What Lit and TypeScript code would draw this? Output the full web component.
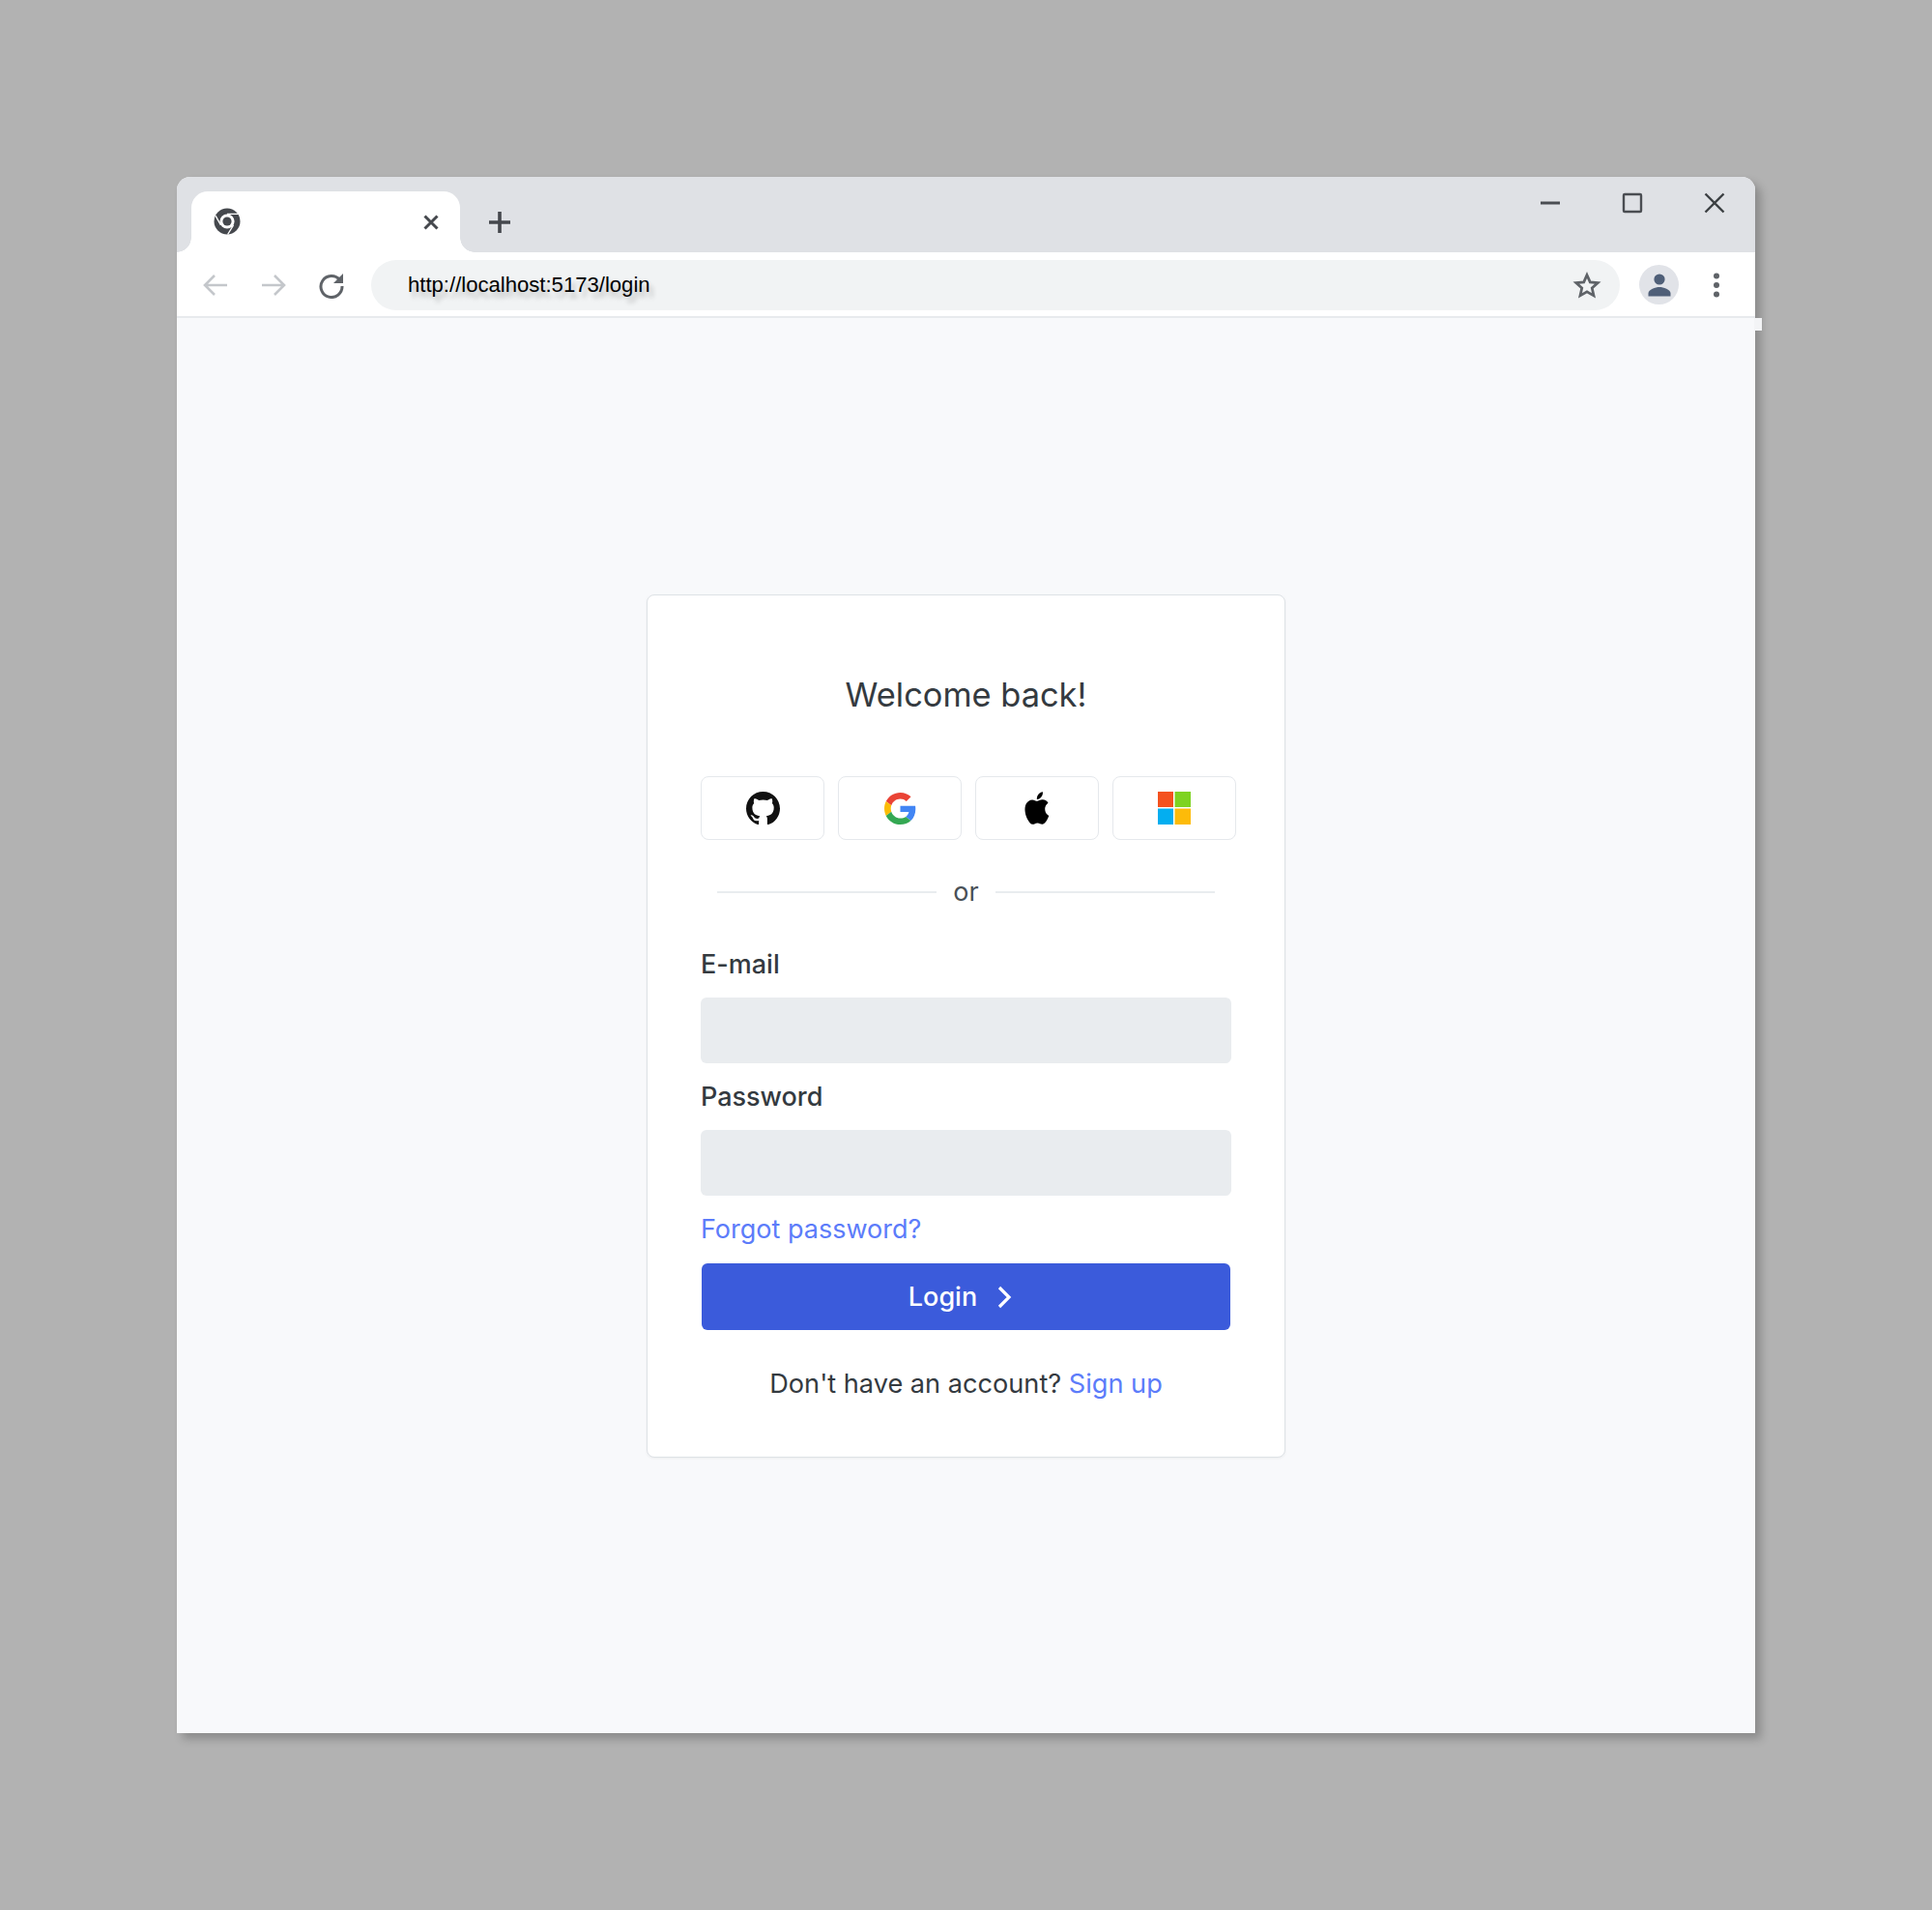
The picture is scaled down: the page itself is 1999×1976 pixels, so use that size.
import { LitElement, html, css, svg } from "lit";
import { customElement } from "lit/decorators.js";

const githubIcon = svg`<svg class="i-gh" viewBox="0 0 16 16"><path fill="#111" d="M8 0C3.58 0 0 3.58 0 8c0 3.54 2.29 6.53 5.47 7.59.4.07.55-.17.55-.38 0-.19-.01-.82-.01-1.49-2.01.37-2.53-.49-2.69-.94-.09-.23-.48-.94-.82-1.13-.28-.15-.68-.52-.01-.53.63-.01 1.08.58 1.23.82.72 1.21 1.87.87 2.33.66.07-.52.28-.87.51-1.07-1.78-.2-3.64-.89-3.64-3.95 0-.87.31-1.59.82-2.15-.08-.2-.36-1.02.08-2.12 0 0 .67-.21 2.2.82.64-.18 1.32-.27 2-.27.68 0 1.36.09 2 .27 1.53-1.04 2.2-.82 2.2-.82.44 1.1.16 1.92.08 2.12.51.56.82 1.27.82 2.15 0 3.07-1.87 3.75-3.65 3.95.29.25.54.73.54 1.48 0 1.07-.01 1.93-.01 2.2 0 .21.15.46.55.38A8.013 8.013 0 0016 8c0-4.42-3.58-8-8-8z"/></svg>`;
const googleIcon = svg`<svg class="i-g" viewBox="0 0 48 48"><path fill="#EA4335" d="M24 9.5c3.54 0 6.71 1.22 9.21 3.6l6.85-6.85C35.9 2.38 30.47 0 24 0 14.62 0 6.51 5.38 2.56 13.22l7.98 6.19C12.43 13.72 17.74 9.5 24 9.5z"/><path fill="#4285F4" d="M46.98 24.55c0-1.57-.15-3.09-.38-4.55H24v9.02h12.94c-.58 2.96-2.26 5.48-4.78 7.18l7.73 6c4.51-4.18 7.09-10.36 7.09-17.65z"/><path fill="#FBBC05" d="M10.53 28.59c-.48-1.45-.76-2.99-.76-4.59s.27-3.14.76-4.59l-7.98-6.19C.92 16.46 0 20.12 0 24c0 3.88.92 7.54 2.56 10.78l7.97-6.19z"/><path fill="#34A853" d="M24 48c6.48 0 11.93-2.13 15.89-5.81l-7.73-6c-2.15 1.45-4.92 2.3-8.16 2.3-6.26 0-11.57-4.22-13.47-9.91l-7.98 6.19C6.51 42.62 14.62 48 24 48z"/></svg>`;
const appleIcon = svg`<svg class="i-a" viewBox="2.9 1.9 18.3 20.2" preserveAspectRatio="none"><path fill="#000" d="M18.71 19.5c-.83 1.24-1.71 2.45-3.05 2.47-1.34.03-1.77-.79-3.29-.79-1.53 0-2 .77-3.27.82-1.31.05-2.3-1.32-3.14-2.53C4.25 17 2.94 12.45 4.7 9.39c.87-1.52 2.43-2.48 4.12-2.51 1.28-.02 2.5.87 3.29.87.78 0 2.26-1.07 3.81-.91.65.03 2.47.26 3.64 1.98-.09.06-2.17 1.28-2.15 3.81.03 3.02 2.65 4.03 2.68 4.04-.03.07-.42 1.44-1.38 2.83M13 3.5c.73-.83 1.94-1.46 2.94-1.5.13 1.17-.34 2.35-1.04 3.19-.69.85-1.83 1.51-2.95 1.42-.15-1.15.41-2.35 1.05-3.11z"/></svg>`;
const msIcon = svg`<svg class="i-ms" viewBox="0 0 34 34"><rect width="16" height="16" fill="#f4511e"/><rect x="17.5" width="16.5" height="16" fill="#7ed321"/><rect y="17.5" width="16" height="16.5" fill="#03aef0"/><rect x="17.5" y="17.5" width="16.5" height="16.5" fill="#fdbb09"/></svg>`;
const chromeIcon = svg`<svg class="fav" viewBox="0 0 28 28"><circle cx="14" cy="14" r="13.5" fill="#45484d"/><circle cx="14" cy="14" r="7.6" fill="#fff"/><circle cx="14" cy="14" r="4.6" fill="#45484d"/><path d="M14 6.400H26M7.500 18 2 8.200M20.500 18 14.600 27.500" stroke="#fff" stroke-width="1.4" fill="none"/></svg>`;

@customElement("app-root")
export class AppRoot extends LitElement {
  static styles = css`
    :host {
      display: block;
      box-sizing: border-box;
      height: 1976px;
      padding: 183px 0 0 183px;
      background: #b2b2b2;
      font-family: Inter, "Liberation Sans", sans-serif;
    }
    svg { display: block; flex: none; }
    .window {
      position: relative;
      width: 1633px;
      height: 1610px;
      display: flex;
      flex-direction: column;
      background: #f8f9fb;
      border-radius: 14px 14px 0 0;
      box-shadow: 6px 6px 10px rgba(0,0,0,.22);
    }
    .chip {
      position: absolute;
      top: 146px;
      right: -7px;
      width: 8px;
      height: 13px;
      background: #f3f4f6;
    }
    .strip {
      height: 78px;
      flex: none;
      display: flex;
      background: #dfe1e5;
      border-radius: 14px 14px 0 0;
    }
    .strip svg, .toolbar svg { filter: blur(0.45px); }
    .tab {
      position: relative;
      box-sizing: border-box;
      width: 278px;
      height: 63px;
      margin: 15px 0 0 15px;
      padding: 0 20px 0 23px;
      display: flex;
      align-items: center;
      justify-content: space-between;
      background: #fff;
      border-radius: 17px 17px 0 0;
    }
    .tab::before, .tab::after {
      content: "";
      position: absolute;
      bottom: 0;
      width: 15px;
      height: 15px;
    }
    .tab::before { left: -15px; background: radial-gradient(circle at 0 0, transparent 14.5px, #fff 15px); }
    .tab::after { right: -15px; background: radial-gradient(circle at 100% 0, transparent 14.5px, #fff 15px); }
    .fav { width: 28px; height: 28px; margin-top: -2px; }
    .tab-x { width: 20px; height: 20px; }
    .plus { width: 26px; height: 26px; margin: 34px 0 0 28px; }
    .controls {
      align-self: flex-start;
      margin: 15px 30px 0 auto;
      display: flex;
      align-items: center;
      gap: 61px;
    }
    .controls svg { width: 24px; height: 24px; }
    .toolbar {
      box-sizing: border-box;
      height: 68px;
      flex: none;
      display: flex;
      align-items: center;
      padding: 1px 28px 0 26px;
      background: #fff;
      border-bottom: 2px solid #e8eaed;
    }
    .nav { width: 28px; height: 28px; margin-right: 32px; }
    .nav.last { margin-right: 27px; }
    .address {
      flex: 1;
      height: 52px;
      box-sizing: border-box;
      display: flex;
      align-items: center;
      justify-content: space-between;
      padding: 0 19px 0 38px;
      background: #f1f3f4;
      border-radius: 26px;
    }
    .url {
      font: 22.1px "Liberation Sans", Arial, sans-serif;
      color: #000;
      text-shadow: 4px 6px 5px rgba(0,0,0,.22);
    }
    .star { width: 30px; height: 30px; }
    .avatar {
      margin-left: 20px;
      width: 41px;
      height: 41px;
      flex: none;
      border-radius: 50%;
      background: #e1e3e8;
      display: flex;
      align-items: center;
      justify-content: center;
    }
    .avatar svg { width: 24px; height: 24px; }
    .dots { width: 24px; height: 30px; margin-left: 27px; }
    .content {
      flex: 1;
      display: flex;
      justify-content: center;
      align-items: flex-start;
      padding-top: 286px;
    }
    .card {
      box-sizing: border-box;
      width: 661px;
      height: 893px;
      padding: 83px 55px 0 55px;
      background: #fff;
      border: 1.5px solid #dee2e6;
      border-radius: 8px;
      box-shadow: 0 1px 3px rgba(0,0,0,.05);
      color: #343a40;
    }
    h1 {
      margin: 0;
      height: 40px;
      font: 400 34.4px/40px Inter, "Liberation Sans", sans-serif;
      text-align: center;
      color: #343a40;
    }
    .socials {
      display: grid;
      grid-template-columns: repeat(4, 128px);
      gap: 14px;
      margin: 64px -5px 0 0;
    }
    .social {
      box-sizing: border-box;
      height: 66px;
      display: flex;
      align-items: center;
      justify-content: center;
      background: #fff;
      border: 1.5px solid #e5e8ec;
      border-radius: 8px;
    }
    .i-gh { width: 35px; height: 35px; }
    .i-g { width: 33px; height: 33px; }
    .i-a { width: 28px; height: 34px; }
    .i-ms { width: 34px; height: 34px; }
    .divider {
      display: flex;
      align-items: center;
      gap: 17px;
      height: 34px;
      margin: 38px 17px 0;
      font-size: 27px;
      color: #495057;
    }
    .divider span { margin-top: -4px; }
    .divider i {
      flex: 1;
      height: 2px;
      margin-top: -2px;
      background: #e9ecef;
    }
    label {
      display: block;
      height: 38px;
      font-size: 27px;
      font-weight: 500;
      line-height: 38px;
      color: #343a40;
    }
    .l1 { margin-top: 38px; }
    .l2 { margin-top: 16px; }
    .input {
      height: 68px;
      margin-top: 15px;
      background: #e9ecef;
      border-radius: 6px;
    }
    .forgot {
      margin-top: 16px;
      height: 38px;
      font-size: 27px;
      line-height: 38px;
    }
    a { color: #5c7cfa; text-decoration: none; }
    .login {
      box-sizing: border-box;
      height: 69px;
      margin: 16px 1px 0;
      padding-right: 10px;
      display: flex;
      align-items: center;
      justify-content: center;
      gap: 18px;
      background: #3b5bdb;
      color: #fff;
      border-radius: 6px;
      font-size: 27px;
      font-weight: 500;
    }
    .login svg { width: 20px; height: 26px; }
    .signup {
      margin: 37px 0 0;
      height: 38px;
      line-height: 38px;
      font-size: 27.15px;
      text-align: center;
      color: #343a40;
    }
  `;

  render() {
    return html`
      <div class="window">
        <div class="chip"></div>
        <div class="strip">
          <div class="tab">
            ${chromeIcon}
            <svg class="tab-x" viewBox="0 0 20 20"><path d="M3.500 3.500l13 13M16.500 3.500l-13 13" stroke="#45484d" stroke-width="3" fill="none"/></svg>
          </div>
          <svg class="plus" viewBox="0 0 26 26"><path d="M13 2v22M2 13h22" stroke="#45484d" stroke-width="3.600" fill="none"/></svg>
          <div class="controls">
            <svg viewBox="0 0 24 24"><path d="M2 12h20" stroke="#4a4d52" stroke-width="3" fill="none"/></svg>
            <svg viewBox="0 0 24 24"><rect x="3" y="3" width="18" height="18" rx="1" stroke="#4a4d52" stroke-width="2.400" fill="none"/></svg>
            <svg viewBox="0 0 24 24"><path d="M2.500 2.500l19 19M21.500 2.500l-19 19" stroke="#3c4043" stroke-width="2.400" fill="none"/></svg>
          </div>
        </div>
        <div class="toolbar">
          <svg class="nav" viewBox="0 0 28 28"><path d="M26 14H3M13 4 3 14l10 10" stroke="#c4c7cb" stroke-width="2.600" fill="none"/></svg>
          <svg class="nav" viewBox="0 0 28 28"><path d="M2 14h23M15 4l10 10-10 10" stroke="#c4c7cb" stroke-width="2.600" fill="none"/></svg>
          <svg class="nav last" viewBox="0 0 28 28"><path d="M22.500 8.500A11 11 0 1 0 25 15" stroke="#5f6368" stroke-width="3" fill="none"/><path d="M26 2V12H16z" fill="#5f6368"/></svg>
          <div class="address">
            <span class="url">http://localhost:5173/login</span>
            <svg class="star" viewBox="0 0 24 24"><path d="M12 3.600l2.600 5.900 6.400.6-4.800 4.300 1.400 6.300L12 17.500l-5.600 3.200 1.400-6.300L3 10.100l6.400-.6z" stroke="#5f6368" stroke-width="2.200" fill="none"/></svg>
          </div>
          <div class="avatar">
            <svg viewBox="0 0 24 24"><circle cx="12" cy="6" r="5.600" fill="#4f5f78"/><path d="M.5 23.500v-3c0-4 7.500-6.500 11.500-6.500s11.500 2.500 11.500 6.500v3z" fill="#4f5f78"/></svg>
          </div>
          <svg class="dots" viewBox="0 0 24 30"><circle cx="12" cy="5.500" r="3" fill="#5f6368"/><circle cx="12" cy="15" r="3" fill="#5f6368"/><circle cx="12" cy="24.500" r="3" fill="#5f6368"/></svg>
        </div>
        <div class="content">
          <div class="card">
            <h1>Welcome back!</h1>
            <div class="socials">
              <div class="social">${githubIcon}</div>
              <div class="social">${googleIcon}</div>
              <div class="social">${appleIcon}</div>
              <div class="social">${msIcon}</div>
            </div>
            <div class="divider"><i></i><span>or</span><i></i></div>
            <label class="l1">E-mail</label>
            <div class="input"></div>
            <label class="l2">Password</label>
            <div class="input"></div>
            <div class="forgot"><a>Forgot password?</a></div>
            <div class="login">
              <span>Login</span>
              <svg viewBox="0 0 20 26"><path d="M5 3l10 10L5 23" stroke="#fff" stroke-width="3.200" fill="none"/></svg>
            </div>
            <div class="signup">Don't have an account? <a>Sign up</a></div>
          </div>
        </div>
      </div>
    `;
  }
}
